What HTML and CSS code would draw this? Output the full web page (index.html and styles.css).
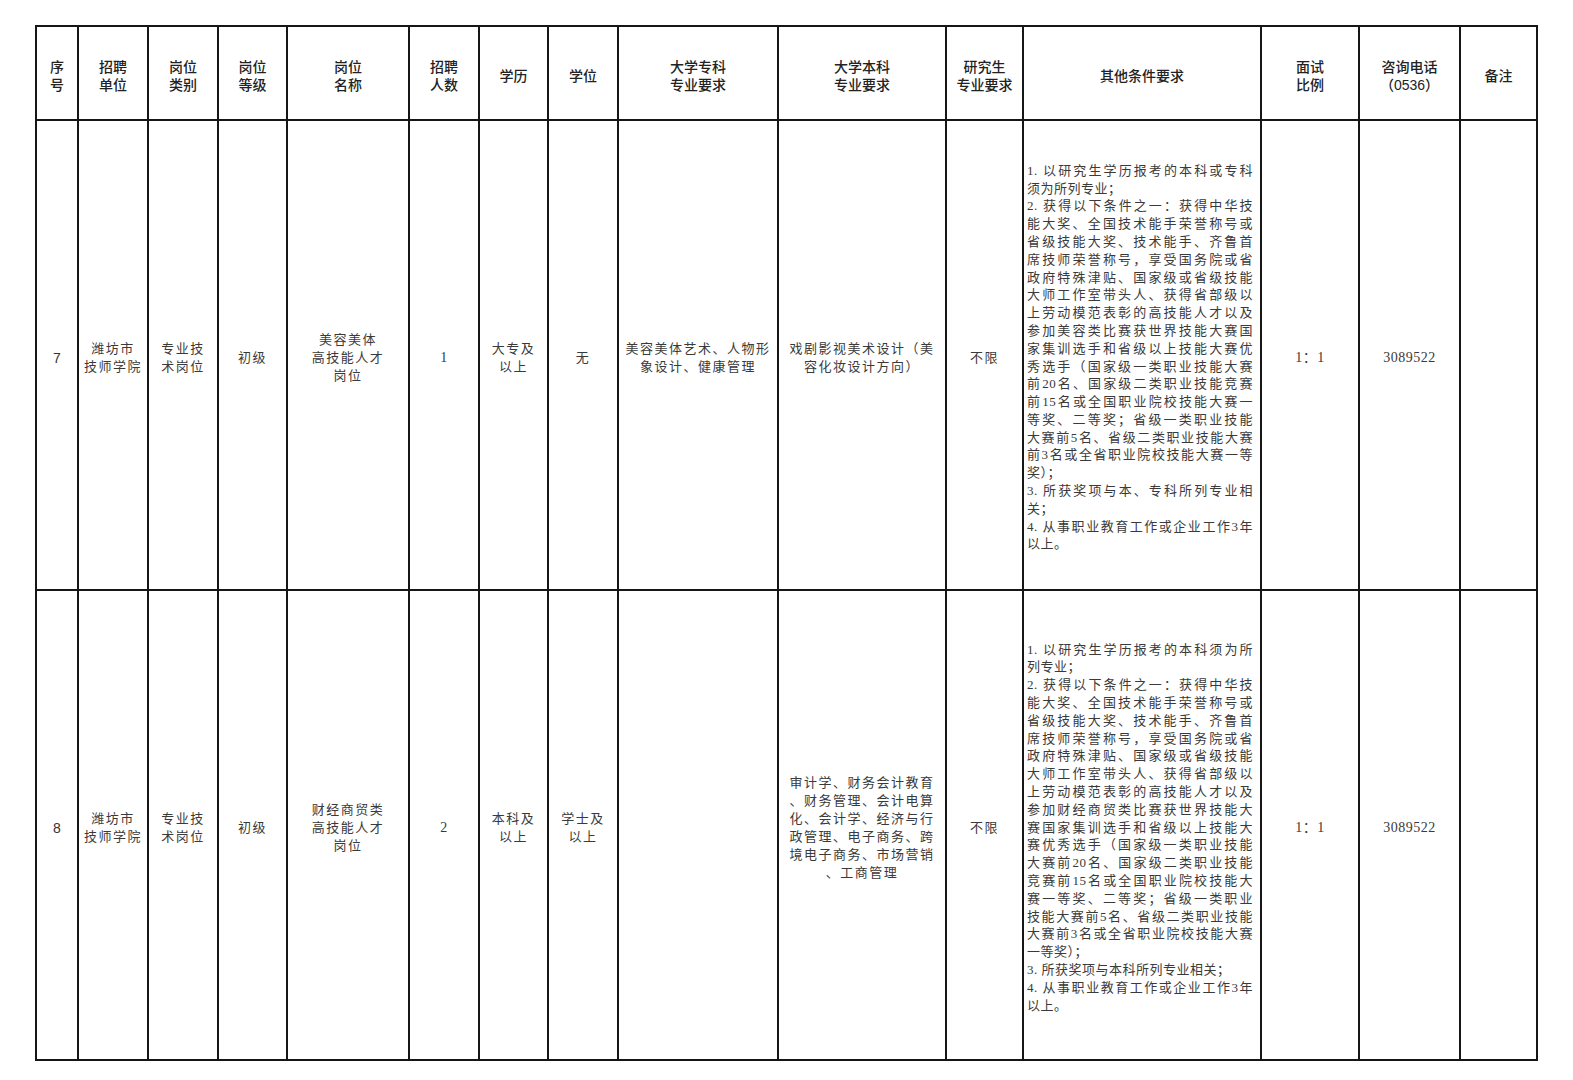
FILE: index.html
```html
<!DOCTYPE html>
<html lang="zh-CN">
<head>
<meta charset="utf-8">
<title>招聘岗位表</title>
<link rel="stylesheet" href="styles.css">
</head>
<body>
<table class="jobs">
  <colgroup>
    <col class="c1"><col class="c2"><col class="c3"><col class="c4"><col class="c5">
    <col class="c6"><col class="c7"><col class="c8"><col class="c9"><col class="c10">
    <col class="c11"><col class="c12"><col class="c13"><col class="c14"><col class="c15">
  </colgroup>
  <thead>
    <tr class="head">
      <th>序<br>号</th>
      <th>招聘<br>单位</th>
      <th>岗位<br>类别</th>
      <th>岗位<br>等级</th>
      <th>岗位<br>名称</th>
      <th>招聘<br>人数</th>
      <th>学历</th>
      <th>学位</th>
      <th>大学专科<br>专业要求</th>
      <th>大学本科<br>专业要求</th>
      <th>研究生<br>专业要求</th>
      <th>其他条件要求</th>
      <th>面试<br>比例</th>
      <th>咨询电话<br>（0536）</th>
      <th>备注</th>
    </tr>
  </thead>
  <tbody>
    <tr class="row r7">
      <td class="sans">7</td>
      <td>潍坊市<br>技师学院</td>
      <td>专业技<br>术岗位</td>
      <td>初级</td>
      <td>美容美体<br>高技能人才<br>岗位</td>
      <td class="num">1</td>
      <td>大专及<br>以上</td>
      <td>无</td>
      <td>美容美体艺术、人物形<br>象设计、健康管理</td>
      <td>戏剧影视美术设计（美<br>容化妆设计方向）</td>
      <td>不限</td>
      <td class="other">
        <div class="ln j">1. 以研究生学历报考的本科或专科</div>
        <div class="ln">须为所列专业；</div>
        <div class="ln j">2. 获得以下条件之一：获得中华技</div>
        <div class="ln j">能大奖、全国技术能手荣誉称号或</div>
        <div class="ln j">省级技能大奖、技术能手、齐鲁首</div>
        <div class="ln j">席技师荣誉称号，享受国务院或省</div>
        <div class="ln j">政府特殊津贴、国家级或省级技能</div>
        <div class="ln j">大师工作室带头人、获得省部级以</div>
        <div class="ln j">上劳动模范表彰的高技能人才以及</div>
        <div class="ln j">参加美容类比赛获世界技能大赛国</div>
        <div class="ln j">家集训选手和省级以上技能大赛优</div>
        <div class="ln j">秀选手（国家级一类职业技能大赛</div>
        <div class="ln j">前20名、国家级二类职业技能竞赛</div>
        <div class="ln j">前15名或全国职业院校技能大赛一</div>
        <div class="ln j">等奖、二等奖；省级一类职业技能</div>
        <div class="ln j">大赛前5名、省级二类职业技能大赛</div>
        <div class="ln j">前3名或全省职业院校技能大赛一等</div>
        <div class="ln">奖）；</div>
        <div class="ln j">3. 所获奖项与本、专科所列专业相</div>
        <div class="ln">关；</div>
        <div class="ln j">4. 从事职业教育工作或企业工作3年</div>
        <div class="ln">以上。</div>
      </td>
      <td class="num">1：1</td>
      <td class="num">3089522</td>
      <td></td>
    </tr>
    <tr class="row r8">
      <td class="sans">8</td>
      <td>潍坊市<br>技师学院</td>
      <td>专业技<br>术岗位</td>
      <td>初级</td>
      <td>财经商贸类<br>高技能人才<br>岗位</td>
      <td class="num">2</td>
      <td>本科及<br>以上</td>
      <td>学士及<br>以上</td>
      <td></td>
      <td>审计学、财务会计教育<br>、财务管理、会计电算<br>化、会计学、经济与行<br>政管理、电子商务、跨<br>境电子商务、市场营销<br>、工商管理</td>
      <td>不限</td>
      <td class="other">
        <div class="ln j">1. 以研究生学历报考的本科须为所</div>
        <div class="ln">列专业；</div>
        <div class="ln j">2. 获得以下条件之一：获得中华技</div>
        <div class="ln j">能大奖、全国技术能手荣誉称号或</div>
        <div class="ln j">省级技能大奖、技术能手、齐鲁首</div>
        <div class="ln j">席技师荣誉称号，享受国务院或省</div>
        <div class="ln j">政府特殊津贴、国家级或省级技能</div>
        <div class="ln j">大师工作室带头人、获得省部级以</div>
        <div class="ln j">上劳动模范表彰的高技能人才以及</div>
        <div class="ln j">参加财经商贸类比赛获世界技能大</div>
        <div class="ln j">赛国家集训选手和省级以上技能大</div>
        <div class="ln j">赛优秀选手（国家级一类职业技能</div>
        <div class="ln j">大赛前20名、国家级二类职业技能</div>
        <div class="ln j">竞赛前15名或全国职业院校技能大</div>
        <div class="ln j">赛一等奖、二等奖；省级一类职业</div>
        <div class="ln j">技能大赛前5名、省级二类职业技能</div>
        <div class="ln j">大赛前3名或全省职业院校技能大赛</div>
        <div class="ln">一等奖）；</div>
        <div class="ln">3. 所获奖项与本科所列专业相关；</div>
        <div class="ln j">4. 从事职业教育工作或企业工作3年</div>
        <div class="ln">以上。</div>
      </td>
      <td class="num">1：1</td>
      <td class="num">3089522</td>
      <td></td>
    </tr>
  </tbody>
</table>
</body>
</html>
```
FILE: styles.css
```css
html, body {
  margin: 0;
  padding: 0;
  background: #ffffff;
}

body {
  font-family: "Liberation Serif", "Noto Sans CJK SC", serif;
  color: #3a3a3a;
}

.jobs {
  border-collapse: collapse;
  table-layout: fixed;
  width: 1503px;
  margin: 25px 0 0 35px;
}

.jobs th,
.jobs td {
  border: 2px solid #161616;
  padding: 0;
  text-align: center;
  vertical-align: middle;
}

.c1 { width: 42px; }
.c2 { width: 70px; }
.c3 { width: 70px; }
.c4 { width: 69px; }
.c5 { width: 122px; }
.c6 { width: 70px; }
.c7 { width: 69px; }
.c8 { width: 70px; }
.c9 { width: 160px; }
.c10 { width: 168px; }
.c11 { width: 77px; }
.c12 { width: 238px; }
.c13 { width: 98px; }
.c14 { width: 101px; }
.c15 { width: 77px; }

.head {
  height: 94px;
}

.head th {
  font-family: "Liberation Sans", "Noto Sans CJK SC", sans-serif;
  font-size: 14px;
  font-weight: 500;
  line-height: 18px;
  color: #222222;
  padding-top: 6px;
}

.r7 { height: 470px; }
.r8 { height: 470px; }

.row td {
  font-size: 13px;
  line-height: 18px;
  letter-spacing: 1.5px;
  font-weight: 400;
  padding-top: 5px;
}

.row td.sans {
  font-family: "Liberation Sans", sans-serif;
  font-size: 14px;
  letter-spacing: 0;
  color: #333333;
}

.row td.num {
  font-size: 14px;
  letter-spacing: 0.5px;
}

.row td.other {
  text-align: left;
  padding: 5px 7px 0 3px;
  letter-spacing: 0.5px;
  line-height: 17.8px;
}

.ln {
  white-space: nowrap;
}

.ln.j {
  text-align: justify;
  text-align-last: justify;
}
```
